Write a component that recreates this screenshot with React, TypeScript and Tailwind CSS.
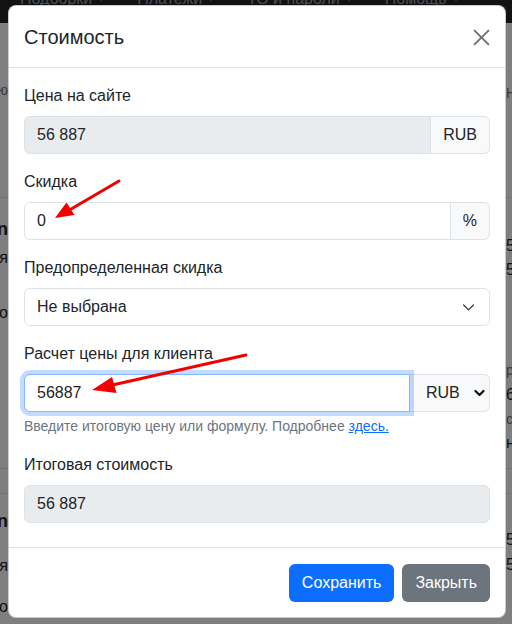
import React from 'react'

function Caret() {
  return (
    <span className="ml-[4px] inline-block h-0 w-0 border-x-[5px] border-t-[5px] border-x-transparent border-t-current align-[3px]" />
  )
}

function Label({ children }: { children: React.ReactNode }) {
  return <div className="mb-2 text-[16px] leading-[24px] text-[#212529]">{children}</div>
}

export default function App() {
  return (
    <div className="relative h-[624px] w-[512px] overflow-hidden bg-white font-['Liberation_Sans',Arial,sans-serif] text-[#212529]">
      {/* page behind the modal */}
      <nav className="flex h-[23px] gap-[31px] bg-[#212529] pl-[20px] text-[16px] leading-[24px] text-[rgba(255,255,255,0.55)]">
        <span className="-mt-[13px] whitespace-nowrap">Подборки<Caret /></span>
        <span className="-mt-[13px] whitespace-nowrap">Платежи<Caret /></span>
        <span className="-mt-[13px] whitespace-nowrap">ТО и пароли<Caret /></span>
        <span className="-mt-[13px] whitespace-nowrap">Помощь<Caret /></span>
      </nav>
      <div className="flex justify-between text-[16px] leading-[24px]">
        <div className="flex w-[8px] flex-col">
          <div className="mt-[55px] flex h-[24px] justify-end whitespace-nowrap text-[14px] text-[#6c757d]">ю</div>
          <div className="mt-[95px] h-px w-[40px] bg-[#dee2e6]" />
          <div className="mt-[19px] flex h-[24px] justify-end whitespace-nowrap text-[18px] font-bold">n</div>
          <div className="mt-[5px] flex h-[24px] justify-end whitespace-nowrap">я</div>
          <div className="mt-[31px] flex h-[24px] justify-end whitespace-nowrap">о</div>
          <div className="mt-[143px] h-px w-[40px] bg-[#dee2e6]" />
          <div className="mt-[24px] h-px w-[40px] bg-[#dee2e6]" />
          <div className="mt-[15px] flex h-[24px] justify-end whitespace-nowrap text-[18px] font-bold">n</div>
          <div className="mt-[21px] flex h-[24px] justify-end whitespace-nowrap">я</div>
          <div className="mt-[17px] flex h-[24px] justify-end whitespace-nowrap">о</div>
        </div>
        <div className="flex w-[6px] flex-col items-start">
          <div className="mt-[58px] h-[24px] whitespace-nowrap text-[14px] text-[#6c757d]">Н</div>
          <div className="mt-[92px] h-px w-[40px] bg-[#dee2e6]" />
          <div className="mt-[36px] h-[24px] whitespace-nowrap">5</div>
          <div className="h-[24px] whitespace-nowrap">5</div>
          <div className="mt-[76px] h-[24px] whitespace-nowrap text-[14px] text-[#6c757d]">р</div>
          <div className="mt-[1px] h-[24px] whitespace-nowrap">6</div>
          <div className="h-[24px] whitespace-nowrap text-[14px] text-[#6c757d]">с</div>
          <div className="h-[24px] whitespace-nowrap">н</div>
          <div className="mt-[13px] h-px w-[40px] bg-[#dee2e6]" />
          <div className="mt-[24px] h-px w-[40px] bg-[#dee2e6]" />
          <div className="mt-[34px] h-[24px] whitespace-nowrap">5</div>
          <div className="mt-[1px] h-[24px] whitespace-nowrap">5</div>
        </div>
      </div>

      {/* backdrop */}
      <div className="absolute inset-0 bg-black/50" />

      {/* modal */}
      <div className="absolute inset-0">
        <div className="ml-[8px] mt-[5px] w-[498px] rounded-[8px] border border-black/20 bg-white">
          <div className="flex items-center justify-between border-b border-[#dee2e6] pb-[15px] pl-[15px] pr-[15px] pt-[16px]">
            <h5 className="text-[20px] font-normal leading-[30px]">Стоимость</h5>
            <button className="flex h-[30px] w-[17px] items-center justify-center text-[#6f6f6f]">
              <svg width="17" height="17" viewBox="0 0 16 16">
                <path d="M1 1 15 15M15 1 1 15" stroke="currentColor" strokeWidth="1.7" />
              </svg>
            </button>
          </div>

          <div className="px-[15px] pb-[24px] pt-[16px] text-[16px] leading-[24px]">
            <div className="mb-4">
              <Label>Цена на сайте</Label>
              <div className="flex h-[38px]">
                <div className="flex flex-1 items-center rounded-l-[6px] border border-[#dee2e6] bg-[#e9ecef] px-3">56 887</div>
                <div className="-ml-px flex items-center rounded-r-[6px] border border-[#dee2e6] bg-[#f8f9fa] px-3">RUB</div>
              </div>
            </div>

            <div className="mb-4">
              <Label>Скидка</Label>
              <div className="flex h-[38px]">
                <div className="flex flex-1 items-center rounded-l-[6px] border border-[#dee2e6] bg-white px-3">0</div>
                <div className="-ml-px flex items-center rounded-r-[6px] border border-[#dee2e6] bg-[#f8f9fa] px-3">%</div>
              </div>
            </div>

            <div className="mb-4">
              <Label>Предопределенная скидка</Label>
              <div className="flex h-[38px] items-center justify-between rounded-[6px] border border-[#dee2e6] bg-white pl-3 pr-[14px]">
                <span>Не выбрана</span>
                <svg width="13" height="10" viewBox="0 0 16 12">
                  <path d="M2 3.5 8 9.5 14 3.5" fill="none" stroke="#343a40" strokeWidth="1.6" strokeLinecap="round" strokeLinejoin="round" />
                </svg>
              </div>
            </div>

            <div className="mb-4">
              <Label>Расчет цены для клиента</Label>
              <div className="flex h-[38px]">
                <div className="relative z-10 flex flex-1 items-center rounded-l-[6px] border border-[#86b7fe] bg-white px-3 shadow-[0_0_0_4px_rgba(13,110,253,0.25)]">56887</div>
                <div className="-ml-px flex w-[81px] items-center justify-between rounded-r-[6px] border border-[#dee2e6] bg-[#f8f9fa] pl-[16px] pr-[4px]">
                  <span>RUB</span>
                  <svg width="11" height="8" viewBox="0 0 11 8">
                    <path d="M1.5 2 5.5 6 9.5 2" fill="none" stroke="#111" strokeWidth="2.2" strokeLinecap="round" strokeLinejoin="round" />
                  </svg>
                </div>
              </div>
              <div className="mt-1 text-[14px] leading-[21px] text-[#6c757d]">
                Введите итоговую цену или формулу. Подробнее <a className="text-[#0d6efd] underline">здесь.</a>
              </div>
            </div>

            <div>
              <Label>Итоговая стоимость</Label>
              <div className="flex h-[38px] items-center rounded-[6px] border border-[#dee2e6] bg-[#e9ecef] px-3">56 887</div>
            </div>
          </div>

          <div className="flex justify-end gap-2 border-t border-[#dee2e6] px-[15px] pb-[15px] pt-4">
            <button className="h-[38px] rounded-[6px] bg-[#0d6efd] px-[13px] text-[16px] text-white">Сохранить</button>
            <button className="h-[38px] rounded-[6px] bg-[#6c757d] px-[13px] text-[16px] text-white">Закрыть</button>
          </div>
        </div>
      </div>

      {/* annotation arrows */}
      <svg className="pointer-events-none absolute left-0 top-0 z-20" width="512" height="624" viewBox="0 0 512 624">
        <line x1="119" y1="181" x2="66" y2="212" stroke="#f20000" strokeWidth="3" strokeLinecap="round" />
        <polygon points="55,218 66.5,202.5 74.5,215" fill="#f20000" />
        <line x1="246" y1="355" x2="108" y2="386" stroke="#f20000" strokeWidth="3" strokeLinecap="round" />
        <polygon points="92,390 112,377 116.5,393" fill="#f20000" />
      </svg>
    </div>
  )
}
